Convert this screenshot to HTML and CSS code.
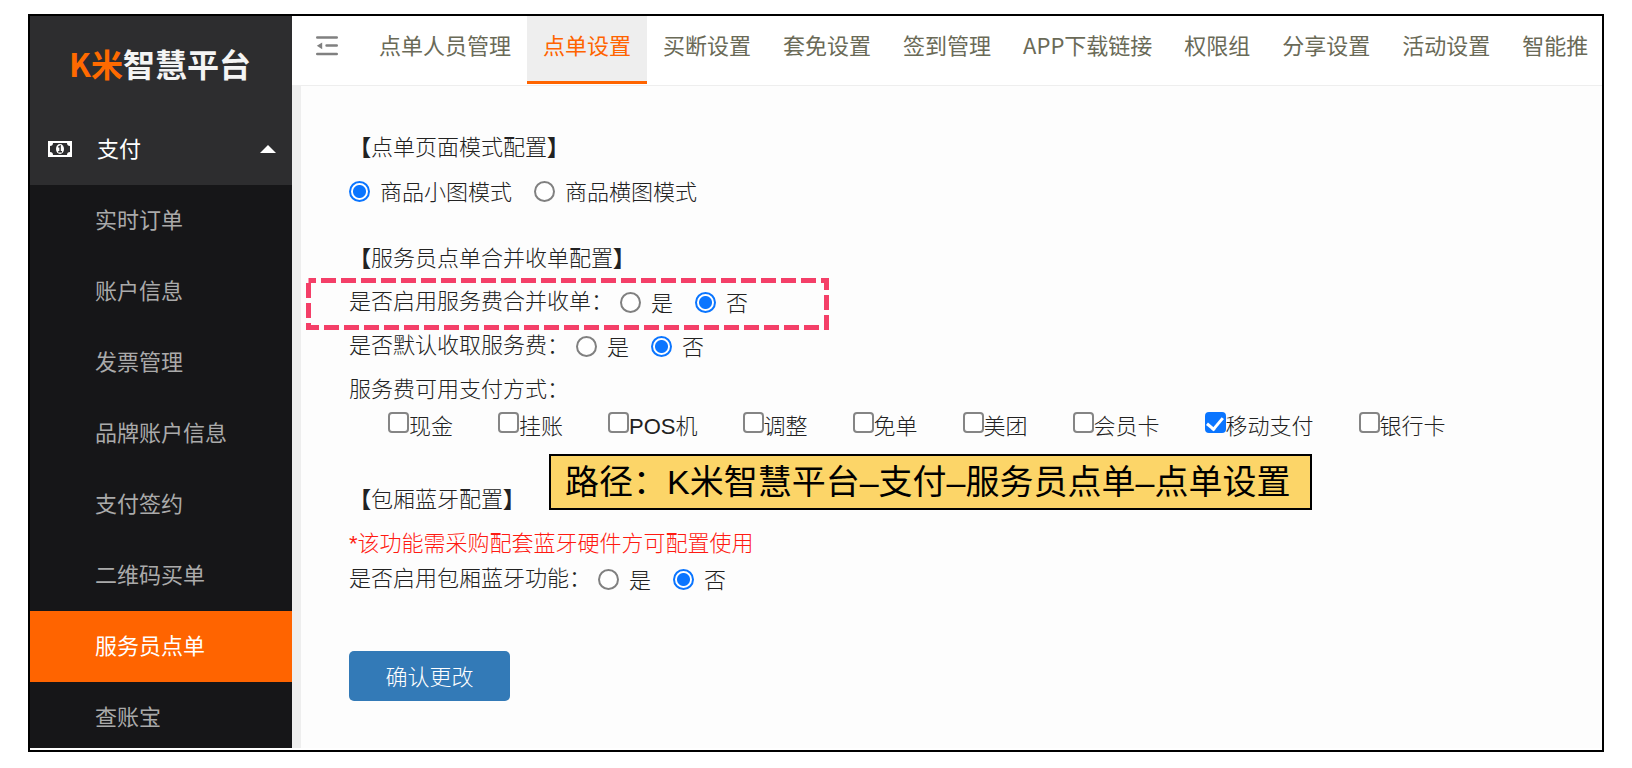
FILE: index.html
```html
<!DOCTYPE html>
<html lang="zh-CN">
<head>
<meta charset="utf-8">
<title>K米智慧平台</title>
<link rel="stylesheet" href="styles.css">
</head>
<body>
<div class="frame">
  <aside class="sidebar">
    <div class="brand"><span class="brand-mark">K米</span>智慧平台</div>
    <button class="group" type="button" aria-expanded="true">
      <svg class="group-icon" viewBox="0 0 24 16" width="24" height="16" aria-hidden="true">
        <path fill="#fff" fill-rule="evenodd" d="M0 0h24v16H0zM5 2a3 3 0 0 1-3 3v6a3 3 0 0 1 3 3h14a3 3 0 0 1 3-3V5a3 3 0 0 1-3-3z"/>
        <ellipse cx="12" cy="8" rx="4" ry="5" fill="#fff"/>
        <path fill="none" stroke="#2d2d2f" stroke-width="1.4" d="M10.3 6.3l1.8-1.3v5.4M10.2 10.8h3.8"/>
      </svg>
      <span class="group-name">支付</span>
      <svg viewBox="0 0 16 8" width="16" height="8" aria-hidden="true"><path fill="#fff" d="M8 0l8 8H0z"/></svg>
    </button>
    <nav class="menu">
      <a href="#">实时订单</a>
      <a href="#">账户信息</a>
      <a href="#">发票管理</a>
      <a href="#">品牌账户信息</a>
      <a href="#">支付签约</a>
      <a href="#">二维码买单</a>
      <a href="#" class="current" aria-current="page">服务员点单</a>
      <a href="#">查账宝</a>
    </nav>
  </aside>
  <div class="main">
    <header class="topbar">
      <button class="collapse" type="button" aria-label="收起菜单">
        <svg viewBox="0 0 22 20" width="22" height="20" aria-hidden="true">
          <path fill="none" stroke="#808080" stroke-width="2.4" stroke-linecap="round" d="M1.2 1.5h19.6M10.5 9.5h10.3M1.2 18h19.6"/>
          <path fill="#808080" d="M.8 9.8l5.4-3.4v6.8z"/>
        </svg>
      </button>
      <nav class="tabs">
        <a href="#">点单人员管理</a>
        <a href="#" class="active" aria-current="page">点单设置</a>
        <a href="#">买断设置</a>
        <a href="#">套免设置</a>
        <a href="#">签到管理</a>
        <a href="#">APP下载链接</a>
        <a href="#">权限组</a>
        <a href="#">分享设置</a>
        <a href="#">活动设置</a>
        <a href="#">智能推</a>
      </nav>
    </header>
    <form class="content">
      <section class="section">
        <h2 class="row title"><b>【</b>点单页面模式配置<b>】</b></h2>
        <div class="row">
          <label class="choice"><input type="radio" name="mode" checked><span>商品小图模式</span></label>
          <label class="choice"><input type="radio" name="mode"><span>商品横图模式</span></label>
        </div>
      </section>
      <section class="section">
        <h2 class="row title"><b>【</b>服务员点单合并收单配置<b>】</b></h2>
        <div class="row highlighted" role="radiogroup" aria-labelledby="merge-label">
          <span class="question" id="merge-label">是否启用服务费合并收单：</span>
          <label class="choice"><input type="radio" name="merge"><span>是</span></label>
          <label class="choice"><input type="radio" name="merge" checked><span>否</span></label>
          <svg class="highlight" viewBox="0 0 523 52" width="523" height="52" aria-hidden="true">
            <rect x="2.5" y="2.5" width="518" height="47" fill="none" stroke="#f43f68" stroke-width="5" stroke-dasharray="15 5" stroke-dashoffset="7.5"/>
          </svg>
        </div>
        <div class="row" role="radiogroup" aria-labelledby="default-label">
          <span class="question" id="default-label">是否默认收取服务费：</span>
          <label class="choice"><input type="radio" name="default"><span>是</span></label>
          <label class="choice"><input type="radio" name="default" checked><span>否</span></label>
        </div>
        <div class="row" id="pay-label">服务费可用支付方式：</div>
        <div class="payments" role="group" aria-labelledby="pay-label">
          <label class="check"><input type="checkbox"><span>现金</span></label>
          <label class="check"><input type="checkbox"><span>挂账</span></label>
          <label class="check"><input type="checkbox"><span>POS机</span></label>
          <label class="check"><input type="checkbox"><span>调整</span></label>
          <label class="check"><input type="checkbox"><span>免单</span></label>
          <label class="check"><input type="checkbox"><span>美团</span></label>
          <label class="check"><input type="checkbox"><span>会员卡</span></label>
          <label class="check"><input type="checkbox" checked><span>移动支付</span></label>
          <label class="check"><input type="checkbox"><span>银行卡</span></label>
          <div class="path-note">路径：K米智慧平台–支付–服务员点单–点单设置</div>
        </div>
      </section>
      <section class="section section-bluetooth">
        <h2 class="row title"><b>【</b>包厢蓝牙配置<b>】</b></h2>
        <p class="row title warning">*该功能需采购配套蓝牙硬件方可配置使用</p>
        <div class="row row-tight" role="radiogroup" aria-labelledby="bt-label">
          <span class="question" id="bt-label">是否启用包厢蓝牙功能：</span>
          <label class="choice"><input type="radio" name="bt"><span>是</span></label>
          <label class="choice"><input type="radio" name="bt" checked><span>否</span></label>
        </div>
      </section>
      <button class="submit" type="button">确认更改</button>
    </form>
  </div>
</div>
</body>
</html>
```
FILE: styles.css
```css
* {
  box-sizing: border-box;
}

body {
  margin: 14px 28px 16px;
  background: #fff;
  font-family: "Noto Sans CJK SC", sans-serif;
  font-size: 22px;
  line-height: 24px;
  color: #222;
}

a {
  color: inherit;
  text-decoration: none;
}

button {
  border: 0;
  font: inherit;
  cursor: pointer;
}

.frame {
  display: flex;
  height: calc(100vh - 30px);
  padding-bottom: 2px;
  border: 2px solid #000;
  overflow: hidden;
}

/* Sidebar */
.sidebar {
  flex: 0 0 262px;
  background: #161618;
  color: #aaa;
  overflow: hidden;
}

.brand {
  display: flex;
  align-items: center;
  height: 98px;
  padding: 0 0 4px 39px;
  background: #2d2d2f;
  color: #f4f4f4;
  font-size: 32px;
  font-weight: 700;
}

.brand-mark {
  color: #ff6a00;
}

.group {
  display: flex;
  align-items: center;
  width: 100%;
  height: 71px;
  padding: 0 16px 2px 18px;
  background: #2d2d2f;
  color: #fff;
  text-align: left;
}

.group-name {
  flex: 1;
  padding: 0 0 4px 25px;
}

.menu a {
  display: flex;
  align-items: center;
  height: 71px;
  padding: 0 0 5px 65px;
}

.menu .current {
  background: #ff6400;
  color: #fff;
}

/* Top tabs */
.main {
  display: flex;
  flex: 1;
  flex-direction: column;
  min-width: 0;
}

.topbar {
  display: flex;
  flex: none;
  height: 70px;
  padding-right: 13px;
  border-bottom: 1px solid #eee;
}

.collapse {
  display: flex;
  flex: none;
  width: 71px;
  padding: 20px 0 0 24px;
  background: none;
}

.tabs {
  display: flex;
  flex: 1;
  min-width: 0;
  overflow: hidden;
  color: #6a6a57;
  white-space: nowrap;
}

.tabs a {
  flex: none;
  height: 68px;
  padding: 16px 16px 0;
}

.tabs .active {
  border-bottom: 3px solid #ff6400;
  background: #eee;
  color: #ff6400;
}

/* Settings form */
.content {
  flex: 1;
  padding: 39px 48px 0;
  border-left: 9px solid #eee;
  background: #fdfdfd;
  font-family: "Liberation Sans", "Noto Sans CJK SC", sans-serif;
  font-weight: 300;
}

.section {
  margin-bottom: 23px;
}

.section-bluetooth {
  margin: 41px 0 58px;
}

.row {
  display: flex;
  align-items: center;
  height: 44px;
  margin: 0;
  font-size: 22px;
  font-weight: inherit;
  white-space: nowrap;
}

.title {
  padding-top: 2px;
}

.title b {
  font-weight: 900;
}

.row-tight {
  height: 28px;
}

.warning {
  color: #ff1a12;
}

.question {
  margin-right: 7px;
}

.choice {
  display: flex;
  align-items: center;
  gap: 10px;
  margin-right: 22px;
}

.choice span {
  padding-top: 4px;
}

.check span {
  padding-top: 3px;
}

input {
  flex: none;
  width: 21px;
  height: 21px;
  margin: 0;
  appearance: none;
  background: #fff;
}

input[type="radio"] {
  border: 2px solid #808080;
  border-radius: 50%;
}

input[type="radio"]:checked {
  border-color: #0a75ff;
  background: radial-gradient(circle, #0a75ff 6px, #fff 7px);
}

input[type="checkbox"] {
  border: 2px solid #858585;
  border-radius: 4px;
}

input[type="checkbox"]:checked {
  display: grid;
  place-items: center;
  border-color: #0a75ff;
  background: #0a75ff;
}

input[type="checkbox"]:checked::after {
  content: "";
  width: 7px;
  height: 13px;
  margin-bottom: 3px;
  border: solid #fff;
  border-width: 0 3px 3px 0;
  transform: rotate(40deg);
}

.highlighted {
  position: relative;
}

.highlight {
  position: absolute;
  top: -2px;
  left: -43px;
}

.payments {
  position: relative;
  display: flex;
  gap: 45px;
  padding-left: 39px;
  white-space: nowrap;
}

.check {
  display: flex;
  height: 24px;
}

.path-note {
  position: absolute;
  top: 42px;
  left: 200px;
  padding: 10px 20px 10px 14px;
  border: 2px solid #000;
  background: #fcd568;
  color: #000;
  font-size: 34px;
  font-weight: 400;
  line-height: 32px;
}

.submit {
  width: 161px;
  height: 50px;
  padding-top: 4px;
  border-radius: 5px;
  background: #337ab7;
  color: #fff;
}
```
